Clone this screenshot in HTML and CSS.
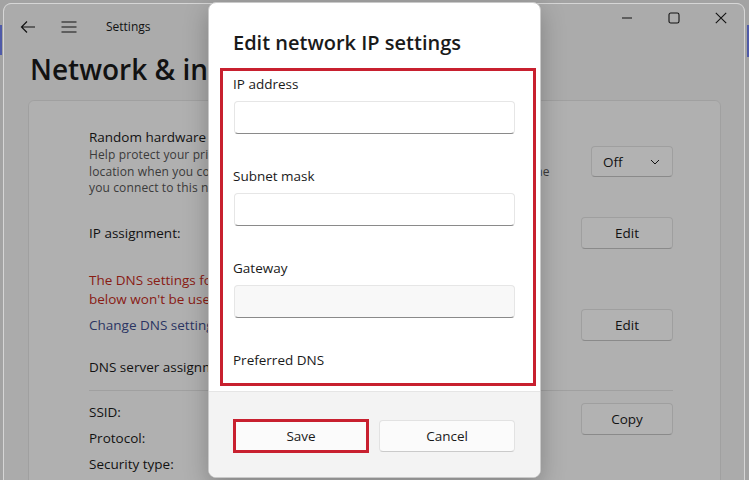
FILE: index.html
```html
<!DOCTYPE html>
<html>
<head>
<meta charset="utf-8">
<title>Edit network IP settings</title>
<link rel="stylesheet" href="styles.css">
</head>
<body>
<div class="desk">
  <div class="window">
    <div class="titlebar">
      <div class="tb-left">
        <svg class="ic-back" width="16" height="14" viewBox="0 0 16 14"><path d="M15 7H1.5M7 1.5L1.5 7L7 12.5" fill="none" stroke="#1a1a1a" stroke-width="1.2"/></svg>
        <svg class="ic-menu" width="16" height="12" viewBox="0 0 16 12"><path d="M0.5 1H15.5M0.5 6H15.5M0.5 11H15.5" fill="none" stroke="#1a1a1a" stroke-width="1.2"/></svg>
        <span class="app-name">Settings</span>
      </div>
      <div class="caption">
        <span class="cap-btn"><svg width="12" height="12" viewBox="0 0 12 12"><path d="M1 6H11" stroke="#1a1a1a" stroke-width="1.1"/></svg></span>
        <span class="cap-btn"><svg width="12" height="12" viewBox="0 0 12 12"><rect x="1" y="1" width="10" height="10" rx="1.8" fill="none" stroke="#1a1a1a" stroke-width="1.1"/></svg></span>
        <span class="cap-btn"><svg width="12" height="12" viewBox="0 0 12 12"><path d="M0.8 0.8L11.2 11.2M11.2 0.8L0.8 11.2" stroke="#1a1a1a" stroke-width="1.1"/></svg></span>
      </div>
    </div>
    <h1 class="page-title">Network &amp; internet</h1>
    <div class="card">
      <div class="row row-random">
        <div class="row-text">
          <div class="row-title">Random hardware addresses</div>
          <div class="row-desc">Help protect your privacy by making it harder for people to track your device<br>location when you connect to this network. The setting takes effect the next time<br>you connect to this network.</div>
        </div>
        <div class="dropdown"><span>Off</span><svg width="10" height="6" viewBox="0 0 10 6"><path d="M1 1L5 5L9 1" fill="none" stroke="#1a1a1a" stroke-width="1"/></svg></div>
      </div>
      <div class="row row-ip">
        <div class="row-title">IP assignment:</div>
        <span class="btn">Edit</span>
      </div>
      <div class="row-dns">
        <div class="warn">The DNS settings for your VPN are in use, so the settings<br>below won't be used.</div>
        <div class="row row-link">
          <span class="link">Change DNS settings</span>
          <span class="btn">Edit</span>
        </div>
        <div class="row-title dns-assign">DNS server assignment:</div>
      </div>
      <div class="row row-props">
        <div class="props">
          <div>SSID:</div>
          <div>Protocol:</div>
          <div>Security type:</div>
        </div>
        <span class="btn btn-copy">Copy</span>
      </div>
    </div>
    <div class="smoke"></div>
  </div>

  <div class="dialog">
    <div class="dialog-body">
      <h2 class="dialog-title">Edit network IP settings</h2>
      <div class="fields">
        <div class="field">
          <label class="field-label">IP address</label>
          <div class="input"></div>
        </div>
        <div class="field">
          <label class="field-label">Subnet mask</label>
          <div class="input"></div>
        </div>
        <div class="field">
          <label class="field-label">Gateway</label>
          <div class="input input-dim"></div>
        </div>
        <div class="field">
          <label class="field-label">Preferred DNS</label>
        </div>
      </div>
    </div>
    <div class="dialog-footer">
      <span class="dbtn dbtn-save">Save</span>
      <span class="dbtn dbtn-cancel">Cancel</span>
    </div>
  </div>
</div>
</body>
</html>
```

FILE: styles.css
```css
* { box-sizing: border-box; }
html, body { margin: 0; padding: 0; }
body {
  width: 749px;
  height: 480px;
  overflow: hidden;
  font-family: "Open Sans", "Noto Sans", sans-serif;
  color: #1a1a1a;
}
.desk {
  position: relative;
  width: 749px;
  height: 480px;
  overflow: hidden;
  padding: 3px 4px 0 3px;
  background:
    linear-gradient(#4f5aa8, #4f5aa8) 0 25px / 2px 30px no-repeat,
    linear-gradient(#4f5aa8, #4f5aa8) right 0 top 25px / 2px 32px no-repeat,
    #a3a3a3;
}
.window {
  position: relative;
  height: 520px;
  background: #f5f5f5;
  border: 1px solid #d6d6d6;
  border-radius: 8px 8px 0 0;
  overflow: hidden;
}
.smoke {
  position: absolute;
  inset: 0;
  background: rgba(0, 0, 0, 0.3);
}
.titlebar {
  display: flex;
  justify-content: space-between;
  align-items: flex-start;
  height: 45px;
}
.tb-left {
  display: flex;
  align-items: center;
  height: 45px;
  padding-left: 16px;
}
.ic-menu { margin-left: 25px; }
.app-name {
  margin-left: 29px;
  font-size: 12px;
}
.caption { display: flex; }
.cap-btn {
  width: 47px;
  height: 28px;
  display: flex;
  align-items: center;
  justify-content: center;
}
.page-title {
  margin: 0;
  padding-left: 26px;
  font-size: 28px;
  font-weight: 600;
  line-height: 40px;
  white-space: nowrap;
}
.card {
  margin: 11px 23px 0 24px;
  background: #fdfdfd;
  border: 1px solid #e6e6e6;
  border-radius: 6px 6px 0 0;
  padding: 0 47px 0 60px;
  height: 420px;
}
.row {
  display: flex;
  align-items: center;
  justify-content: space-between;
}
.row-title {
  font-size: 13.5px;
  line-height: 20px;
  white-space: nowrap;
}
.row-random {
  padding: 26px 0 20px;
}
.row-text { min-width: 0; }
.row-desc {
  font-size: 12px;
  letter-spacing: 0.13px;
  line-height: 16.5px;
  color: #555555;
  white-space: nowrap;
}
.dropdown {
  flex: none;
  width: 82px;
  height: 31px;
  margin-left: 10px;
  display: flex;
  align-items: center;
  justify-content: space-between;
  padding: 0 12px 0 11px;
  font-size: 13.5px;
  background: #ffffff;
  border: 1px solid #e4e4e4;
  border-bottom-color: #c6c6c6;
  border-radius: 4px;
}
.btn {
  flex: none;
  width: 92px;
  height: 32px;
  display: flex;
  align-items: center;
  justify-content: center;
  font-size: 13.5px;
  background: #ffffff;
  border: 1px solid #e4e4e4;
  border-bottom-color: #c6c6c6;
  border-radius: 4px;
}
.row-ip { height: 32px; }
.row-dns {
  padding: 22px 0 13px;
  border-bottom: 1px solid #e6e6e6;
}
.warn {
  font-size: 13.5px;
  line-height: 19px;
  color: #c42b1c;
  white-space: nowrap;
}
.row-link { height: 32px; }
.link {
  font-size: 13.5px;
  color: #3d4d8e;
  white-space: nowrap;
}
.dns-assign { margin-top: 16px; }
.row-props {
  align-items: flex-start;
  padding-top: 8px;
}
.props {
  font-size: 13.5px;
  line-height: 26px;
}
.btn-copy { margin-top: 4px; }

/* dialog */
.dialog {
  position: absolute;
  left: 208px;
  top: 2px;
  width: 333px;
  height: 476px;
  background: #ffffff;
  border: 1px solid #c9c9c9;
  border-radius: 8px;
  box-shadow: 0 8px 24px rgba(0, 0, 0, 0.25);
  display: flex;
  flex-direction: column;
  overflow: hidden;
}
.dialog-body {
  flex: 1;
  padding: 0 4px 0 11px;
}
.dialog-title {
  margin: 26px 0 0;
  padding-left: 13px;
  font-size: 20px;
  font-weight: 600;
  line-height: 28px;
  white-space: nowrap;
}
.fields {
  margin-top: 11px;
  height: 318px;
  border: 3px solid #c8202f;
  padding: 3px 0 0 10px;
  overflow: hidden;
}
.field + .field { margin-top: 32px; }
.field-label {
  display: block;
  font-size: 13.5px;
  line-height: 20px;
}
.input {
  margin: 7px 0 0 1px;
  width: 281px;
  height: 33px;
  background: #ffffff;
  border: 1px solid #e6e6e6;
  border-bottom: 1px solid #8a8a8a;
  border-radius: 4px;
}
.input-dim { background: #f8f8f8; }
.dialog-footer {
  flex: none;
  height: 86px;
  background: #f3f3f3;
  border-top: 1px solid #e5e5e5;
  display: flex;
  align-items: center;
  padding: 2px 0 0 24px;
  gap: 10px;
}
.dbtn {
  width: 136px;
  display: flex;
  align-items: center;
  justify-content: center;
  font-size: 13.5px;
  background: #fbfbfb;
  border-radius: 4px;
}
.dbtn-save {
  height: 34px;
  border: 3px solid #c8202f;
  border-radius: 0;
}
.dbtn-cancel {
  height: 32px;
  border: 1px solid #e2e2e2;
  border-bottom-color: #cacaca;
}
```
